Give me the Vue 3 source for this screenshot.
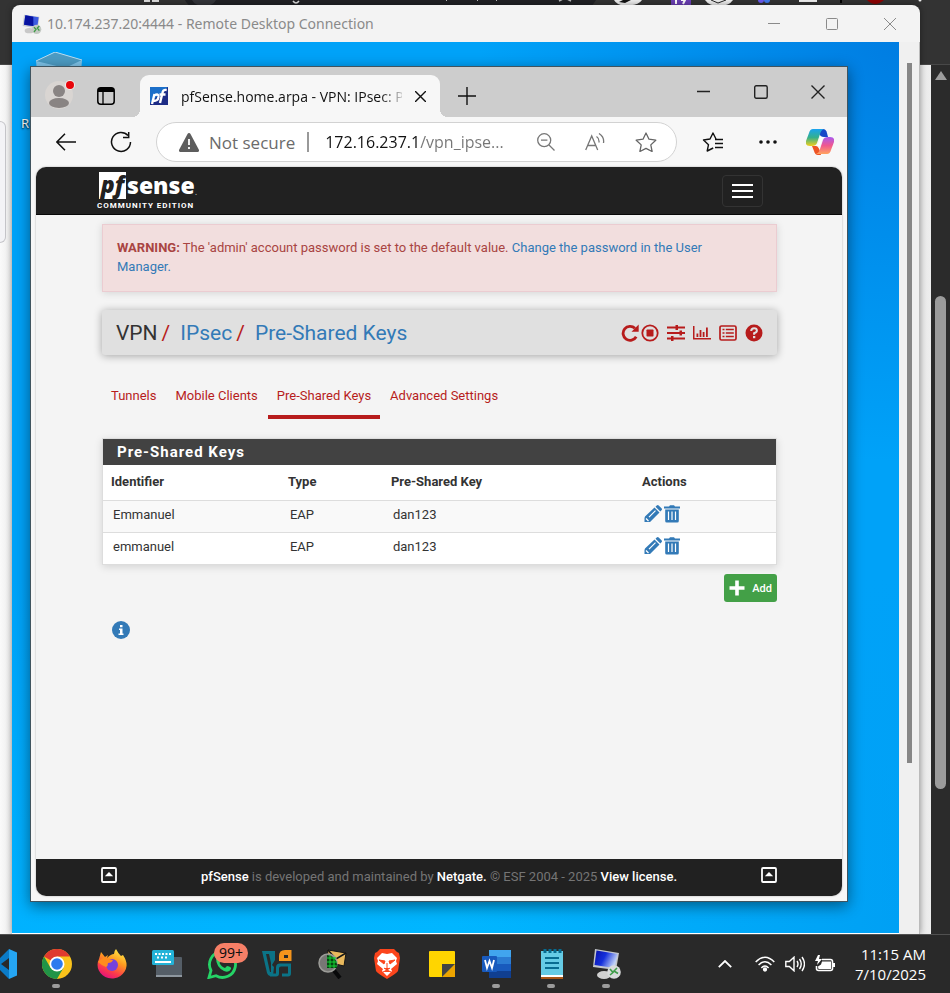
<script setup>
const rows = [
  { id: 'Emmanuel', type: 'EAP', key: 'dan123' },
  { id: 'emmanuel', type: 'EAP', key: 'dan123' },
]
const tabs = [
  { label: 'Tunnels', active: false },
  { label: 'Mobile Clients', active: false },
  { label: 'Pre-Shared Keys', active: true },
  { label: 'Advanced Settings', active: false },
]
</script>

<template>
  <div class="desktop">
    <div class="workspace">
      <!-- Host browser peeking out behind the remote session -->
      <div class="back">
        <div class="back-bar">
          <svg class="back-icons" width="800" height="8" viewBox="0 0 800 8" aria-hidden="true">
            <rect x="0" y="0" width="6" height="2" fill="#ddd" /><rect x="8" y="0" width="7" height="2" fill="#ddd" />
            <path d="M41 0H452Q448 6 446 8H50Q43 5 41 0z" fill="#202125" />
            <path d="M48 0q3 6 12 6t12-6z" fill="#34353a" />
            <path d="M149 1q3 4 6 0" stroke="#ddd" stroke-width="1.500" fill="none" />
            <path d="M302 1l1-1M333 1l1-1M352 1l1-1" stroke="#bbb" fill="none" />
            <path d="M415 1l4-2M423 -1l4 2" stroke="#bbb" stroke-width="1.500" fill="none" />
            <path d="M470 0q4 7 14 5q10 1 14-5z" fill="#eee" /><path d="M475 2l4-2h8l-6 3z" fill="#111" />
            <rect x="527" y="0" width="20" height="6" fill="#6b3fb5" />
            <path d="M532 0v4M537 0h4l-2 4" stroke="#fff" stroke-width="2" fill="none" />
            <path d="M561 0q4 6 14 6t14-6z" fill="#eee" /><path d="M567 0l7 3 8-3" stroke="#222" fill="none" />
            <circle cx="617" cy="0" r="3" fill="#6a5af0" /><circle cx="623" cy="0" r="3" fill="#4179ee" />
            <path d="M656 0v1h16V0" stroke="#eee" stroke-width="2" fill="none" />
            <rect x="696" y="0" width="2" height="3" fill="#000" />
            <path d="M723 0q8 8 17 0z" fill="#8c0303" />
            <circle cx="776" cy="0" r="1.500" fill="#eee" />
          </svg>
        </div>
        <div class="back-page">
          <div class="back-card"></div>
          <div class="back-scroll">
            <svg width="12" height="10" viewBox="0 0 12 10"><path d="M6 0L12 9H0z" fill="#9d9d9d" /></svg>
            <div class="back-thumb"></div>
          </div>
        </div>
      </div>

      <!-- Remote desktop window -->
      <section class="rdp">
        <header class="rdp-title">
          <svg width="20" height="20" viewBox="0 0 30 30" aria-hidden="true">
            <path d="M3 1l23 3-2 18L1 18z" fill="#c9ccd3" /><path d="M5 2l20 3-2 14L3 16z" fill="#3d5be0" />
            <path d="M5 2l12 2 0 14-14-2z" fill="#0712a0" /><ellipse cx="11" cy="25" rx="7" ry="4" fill="#c8c8c8" />
            <circle cx="22" cy="23" r="7" fill="#c3c9c3" /><path d="M18 20l3 3-3 4M26 18l-3 3 3 4" stroke="#3f9b46" stroke-width="2" fill="none" />
          </svg>
          <span class="rdp-name">10.174.237.20:4444 - Remote Desktop Connection</span>
          <div class="rdp-buttons">
            <button aria-label="Minimize session"><svg width="12" height="12" viewBox="0 0 12 12"><path d="M0 5.500h12" /></svg></button>
            <button aria-label="Maximize session"><svg width="12" height="12" viewBox="0 0 12 12"><rect x=".5" y=".5" width="11" height="11" rx="1" /></svg></button>
            <button aria-label="Close session"><svg width="12" height="12" viewBox="0 0 12 12"><path d="M0 0l12 12M12 0L0 12" /></svg></button>
          </div>
        </header>
        <div class="rdp-body">
          <div class="wallpaper">
            <div class="bin">
              <svg width="48" height="60" viewBox="0 0 48 60" aria-hidden="true">
                <path d="M1 9L20 0 47 8 44 50H5z" fill="#7fc4ea" /><path d="M1 9L20 0 47 8 30 16z" fill="#4d9cc4" />
                <path d="M1 9L20 0 47 8" stroke="#b9dcf0" fill="none" />
              </svg>
              <span>Recycle Bin</span>
            </div>

            <!-- Edge window -->
            <section class="edge">
              <header class="tabstrip">
                <button class="profile" aria-label="Profile">
                  <svg width="32" height="32" viewBox="0 0 32 32">
                    <circle cx="15" cy="18" r="14" fill="#d9d5d2" /><circle cx="15" cy="14" r="6" fill="#898483" />
                    <ellipse cx="15" cy="26" rx="10" ry="5" fill="#898483" />
                    <circle cx="26" cy="8" r="5" fill="#eee" /><circle cx="26" cy="8" r="4" fill="#e8050b" />
                  </svg>
                </button>
                <button class="workspaces" aria-label="Tab actions">
                  <svg width="18" height="18" viewBox="0 0 18 18" fill="none" stroke="#000">
                    <rect x=".8" y=".8" width="16.400" height="16.400" rx="3" stroke-width="1.500" /><path d="M1 3h16" stroke-width="4" /><path d="M6 4v13" stroke-width="1.300" />
                  </svg>
                </button>
                <div class="tab">
                  <svg width="18" height="18" viewBox="0 0 18 18" aria-hidden="true">
                    <rect width="18" height="18" fill="#1d2c86" /><path d="M0 0h18L0 16z" fill="#1c6fc9" />
                    <g fill="none" stroke="#fff" stroke-width="2.400"><path d="M2 17L4.500 7M4 8.500q5-2.500 4.500 1.500-.8 4.500-5 3.500" /><path d="M10 16l2.700-11q.6-2.500 4-2M9.500 7.500h6" /></g>
                  </svg>
                  <span class="tab-name">pfSense.home.arpa - VPN: IPsec: P</span>
                  <button aria-label="Close tab"><svg width="11" height="11" viewBox="0 0 11 11"><path d="M0 0l11 11M11 0L0 11" stroke="#111" stroke-width="1.400" /></svg></button>
                </div>
                <button class="plus" aria-label="New tab"><svg width="18" height="18" viewBox="0 0 18 18"><path d="M0 9h18M9 0v18" stroke="#111" stroke-width="1.400" /></svg></button>
                <div class="edge-buttons">
                  <button aria-label="Minimize"><svg width="14" height="14" viewBox="0 0 14 14"><path d="M0 6.500h13" /></svg></button>
                  <button aria-label="Maximize"><svg width="14" height="14" viewBox="0 0 14 14"><rect x=".7" y=".7" width="12.500" height="12.500" rx="1.500" /></svg></button>
                  <button aria-label="Close"><svg width="14" height="14" viewBox="0 0 14 14"><path d="M.5.5l13 13M13.500.5l-13 13" /></svg></button>
                </div>
              </header>

              <div class="toolbar">
                <button class="back-btn" aria-label="Back"><svg width="20" height="18" viewBox="0 0 20 18" fill="none" stroke="#111" stroke-width="1.500"><path d="M20 9H1M9 .8L.9 9 9 17.200" /></svg></button>
                <button class="reload" aria-label="Reload"><svg width="22" height="22" viewBox="0 0 22 22" fill="none" stroke="#111" stroke-width="1.500"><path d="M20.500 11A9.500 9.500 0 1 1 18 4.500M18.700 1v5.500H13" /></svg></button>
                <div class="address">
                  <svg width="20" height="19" viewBox="0 0 20 19" aria-hidden="true"><path d="M10 0q1 0 1.500 1L20 17q.3 2-1.500 2h-17Q-.3 19 0 17L8.500 1Q9 0 10 0z" fill="#5d5d5d" /><path d="M10 6v6M10 14v2" stroke="#fff" stroke-width="1.800" /></svg>
                  <label for="url">Not secure</label>
                  <i class="sep"></i>
                  <input id="url" type="text" value="172.16.237.1/vpn_ipse..." />
                  <button aria-label="Zoom out"><svg width="18" height="18" viewBox="0 0 18 18" fill="none" stroke="#777" stroke-width="1.300"><circle cx="7.200" cy="7.200" r="6.500" /><path d="M4 7.200h6.400M12 12l5.500 5.500" /></svg></button>
                  <button aria-label="Read aloud"><svg width="20" height="18" viewBox="0 0 20 18" fill="none" stroke="#777" stroke-width="1.300"><path d="M.7 17L6.700 3l6 14M2.600 12.500h8.200M11.500 3.500q3 2 2.500 6M14 .5q5.500 3.500 4.500 9.500" /></svg></button>
                  <button aria-label="Favorite"><svg width="22" height="20" viewBox="0 0 22 20" fill="none" stroke="#666" stroke-width="1.300" stroke-linejoin="round"><path d="M11 1l3 6.200 6.800 1-5 4.700 1.300 6.600-6.100-3.200-6.100 3.200 1.300-6.600-5-4.700 6.800-1z" /></svg></button>
                </div>
                <button class="favs" aria-label="Favorites"><svg width="22" height="20" viewBox="0 0 22 20" fill="none" stroke="#111" stroke-width="1.400" stroke-linejoin="round"><path d="M14 7l-3-6-3 6-6.500 1 5 4.700L5.200 19l6-3M13 7.500h8M13 11.500h8M13 15.500h8" /></svg></button>
                <button class="more" aria-label="More"><svg width="18" height="4" viewBox="0 0 18 4" fill="#111"><circle cx="2" cy="2" r="1.800" /><circle cx="9" cy="2" r="1.800" /><circle cx="16" cy="2" r="1.800" /></svg></button>
                <button class="copilot" aria-label="Copilot">
                  <svg width="28" height="26" viewBox="0 0 28 26">
                    <defs>
                      <linearGradient id="cpA" x1="0" y1="0" x2="0" y2="1"><stop offset="0" stop-color="#1aa3f0" /><stop offset=".5" stop-color="#35b08c" /><stop offset="1" stop-color="#f2cf1b" /></linearGradient>
                      <linearGradient id="cpB" x1="0" y1="0" x2="0" y2="1"><stop offset="0" stop-color="#a95af0" /><stop offset=".5" stop-color="#f0588f" /><stop offset="1" stop-color="#ffa45f" /></linearGradient>
                    </defs>
                    <path d="M13 0h4q3 0 4 4l1 4h-4q-4 0-5-4z" fill="#1848c8" />
                    <path d="M6 17h4q3 0 5 9h-3q-3 0-4-4z" fill="#ee5424" />
                    <path d="M7 0h11q-3 1-4 5l-3 9q-1 3-5 3H4q-5 0-4-5L3 4Q4 0 7 0z" fill="url(#cpA)" />
                    <path d="M21 25H10q3-1 4-5l3-9q1-3 5-3h2q5 0 4 5l-3 8q-1 4-4 4z" fill="url(#cpB)" />
                    <path d="M14.500 8h3.500q-1.500 1-2 3l-2 6h-3.500q1.500-1 2-3z" fill="#fff" />
                  </svg>
                </button>
              </div>

              <div class="page">
                <nav class="navbar">
                  <a href="#" class="brand" aria-label="pfSense home">
                    <span class="brand-row"><span class="pf">pf</span><span class="sense">sense</span><span class="reg">.</span></span>
                    <span class="edition">COMMUNITY EDITION</span>
                  </a>
                  <button class="burger" aria-label="Toggle navigation"><i></i><i></i><i></i></button>
                </nav>

                <main class="content">
                  <div class="alert"><strong>WARNING:</strong> The 'admin' account password is set to the default value. <a href="#">Change the password in the User Manager.</a></div>

                  <header class="crumbs">
                    <ol>
                      <li>VPN</li>
                      <li><a href="#">IPsec</a></li>
                      <li><a href="#">Pre-Shared Keys</a></li>
                    </ol>
                    <div class="tools">
                      <a href="#" aria-label="Restart service"><svg width="18" height="18" viewBox="0 0 18 18"><path d="M15.200 12.700A7 7 0 1 1 14 4.300" fill="none" stroke="currentColor" stroke-width="2.800" /><path d="M17.700.5v7.200h-7.200z" fill="currentColor" /></svg></a>
                      <a href="#" aria-label="Stop service"><svg width="18" height="18" viewBox="0 0 18 18"><circle cx="9" cy="9" r="7.700" fill="none" stroke="currentColor" stroke-width="1.800" /><rect x="5.500" y="5.500" width="7" height="7" rx=".7" fill="currentColor" /></svg></a>
                      <a href="#" aria-label="Settings"><svg width="18" height="18" viewBox="0 0 18 18" fill="currentColor"><path d="M0 2.500h18v2H0zM0 8h18v2H0zM0 13.500h18v2H0zM8.500 1H11v5H8.500zM12.500 6.500H15v5h-2.500zM4 12h2.500v5H4z" /></svg></a>
                      <a href="#" aria-label="Status"><svg width="18" height="18" viewBox="0 0 18 18" fill="currentColor"><path d="M0 2h1.500v12H18v1.500H0zM3.500 9.500h1.800V13H3.500zM6.600 6h1.800v7H6.600zM9.700 8h1.800v5H9.700zM13 3.500h1.800V13H13z" /></svg></a>
                      <a href="#" aria-label="Logs"><svg width="18" height="18" viewBox="0 0 18 18"><rect x="1" y="2" width="16" height="14" rx="1.500" fill="none" stroke="currentColor" stroke-width="1.700" /><path d="M3.500 5.500h2M6.800 5.500h8M3.500 9h2M6.800 9h8M3.500 12.500h2M6.800 12.500h8" stroke="currentColor" stroke-width="1.700" /></svg></a>
                      <a href="#" aria-label="Help"><svg width="18" height="18" viewBox="0 0 18 18"><circle cx="9" cy="9" r="8.500" fill="currentColor" /><path d="M6.200 7q.2-2.700 2.900-2.700Q11.900 4.300 11.900 6.700 11.900 8.200 9.100 9.300V10.700" fill="none" stroke="#e0e0e0" stroke-width="2" /><rect x="8" y="12" width="2.300" height="2.200" fill="#e0e0e0" /></svg></a>
                    </div>
                  </header>

                  <nav class="tabs">
                    <a v-for="t in tabs" :key="t.label" href="#" :class="{ active: t.active }">{{ t.label }}</a>
                  </nav>

                  <section class="panel">
                    <h2>Pre-Shared Keys</h2>
                    <table>
                      <thead>
                        <tr><th class="c1">Identifier</th><th class="c2">Type</th><th class="c3">Pre-Shared Key</th><th class="c4">Actions</th></tr>
                      </thead>
                      <tbody>
                        <tr v-for="r in rows" :key="r.id">
                          <td>{{ r.id }}</td><td>{{ r.type }}</td><td>{{ r.key }}</td>
                          <td>
                            <div class="actions">
                              <a href="#" :aria-label="'Edit ' + r.id"><svg width="18" height="18" viewBox="0 0 18 18"><path d="M1 11.500L10.500 2.500 15.500 7.500 6 17H.5v-4zM11.500 1.700l1.200-1.200q1-1 2 0L17.500 3.300q1 1 0 2l-1.200 1.200z" fill="currentColor" /><path d="M5 12.200l6.500-6.500M2 13.500l2.500 2.500" stroke="#fff" stroke-width="1.200" /></svg></a>
                              <a href="#" :aria-label="'Delete ' + r.id"><svg width="16" height="18" viewBox="0 0 16 18"><path d="M0 1.500h5L6 .3h4l1 1.200h5v2H0zM1.200 4.500h13.600v11.500q0 1.500-1.500 1.500H2.700q-1.500 0-1.500-1.500z" fill="currentColor" /><path d="M4.500 6.500v8.500M8 6.500v8.500M11.500 6.500v8.500" stroke="#fff" stroke-width="1.200" /></svg></a>
                            </div>
                          </td>
                        </tr>
                      </tbody>
                    </table>
                  </section>

                  <div class="add-row">
                    <a href="#" class="add"><svg width="16" height="16" viewBox="0 0 16 16" aria-hidden="true"><path d="M8 .5v15M.5 8h15" stroke="#fff" stroke-width="3.600" /></svg>Add</a>
                  </div>
                  <button class="info" aria-label="Information"><svg width="18" height="18" viewBox="0 0 18 18"><circle cx="9" cy="9" r="9" fill="#337ab7" /><path d="M8 4h2.500v2.300H8zM7 7.500h3.500v5h1V14H6.500v-1.500H8V9H7z" fill="#fff" /></svg></button>
                </main>

                <footer class="foot">
                  <a href="#" aria-label="Scroll to top"><svg width="16" height="16" viewBox="0 0 16 16"><rect x="1" y="1" width="14" height="14" rx="1" fill="none" stroke="#fff" stroke-width="1.800" /><path d="M3.800 9.300L8 5l4.200 4.300z" fill="#fff" /></svg></a>
                  <p><a href="#">pfSense</a> is developed and maintained by <a href="#">Netgate.</a> © ESF 2004 - 2025 <a href="#">View license.</a></p>
                  <a href="#" aria-label="Back to top"><svg width="16" height="16" viewBox="0 0 16 16"><rect x="1" y="1" width="14" height="14" rx="1" fill="none" stroke="#fff" stroke-width="1.800" /><path d="M3.800 9.300L8 5l4.200 4.300z" fill="#fff" /></svg></a>
                </footer>
              </div>
            </section>
          </div>
          <div class="rdp-scroll"><div class="rdp-thumb"></div></div>
        </div>
      </section>
    </div>

    <!-- Taskbar -->
    <footer class="taskbar">
      <div class="apps">
        <button aria-label="Visual Studio Code">
          <svg width="30" height="30" viewBox="0 0 30 30"><path d="M22 0v9l-8 6 8 6v9L12 20 4 25l-3-2 8-8-8-8 3-2 8 5z" fill="#0b7bc7" /><path d="M22 0l8 3.500v23L22 30z" fill="#25a5f2" /></svg>
        </button>
        <button class="run" aria-label="Google Chrome">
          <svg width="30" height="30" viewBox="0 0 30 30"><circle cx="15" cy="15" r="15" fill="#f9c21b" /><path d="M15 15L2 7.500A15 15 0 0 1 28 7.500H15z" fill="#df3a2f" /><path d="M2 7.500A15 15 0 0 0 15 30l6.500-11.200L8.500 18.800z" fill="#219447" /><circle cx="15" cy="15" r="7.500" fill="#fff" /><circle cx="15" cy="15" r="5.800" fill="#2c7bef" /></svg>
        </button>
        <button aria-label="Firefox">
          <svg width="30" height="30" viewBox="0 0 30 30">
            <defs><linearGradient id="fx" x1=".8" y1="0" x2=".3" y2="1"><stop offset="0" stop-color="#fff04a" /><stop offset=".4" stop-color="#ff9a1f" /><stop offset=".75" stop-color="#fb3a4b" /><stop offset="1" stop-color="#e3107f" /></linearGradient></defs>
            <path d="M17 5q0-3 2-5 2 4 5 7l2-1q4 6 3.500 11A14.500 13.500 0 1 1 2 10L4 3l4 5 3-2-1 3q4-4 7-4z" fill="url(#fx)" />
            <circle cx="15" cy="16" r="6" fill="#7642dc" /><path d="M1 13q5-6 9-4 3 2 6 2-1 3-5 3 0 3-2 4-5-2-8-5z" fill="#ff8c1d" />
          </svg>
        </button>
        <button aria-label="On-screen keyboard">
          <svg width="30" height="30" viewBox="0 0 30 30"><rect x="4" y="8" width="26" height="20" rx="1" fill="#555e67" /><path d="M4 26h26v2H4z" fill="#8e979f" /><rect x="0" y="1" width="22" height="15" rx="1.500" fill="#23b3d8" /><path d="M3 5h2m1.500 0h2m1.500 0h2m1.500 0h2m1.500 0h2M5 8.500h2m2 0h2m2 0h2" stroke="#fff" stroke-width="2" /><path d="M3 13h16" stroke="#fff" stroke-width="2" /></svg>
        </button>
        <button class="wa" aria-label="WhatsApp">
          <svg width="30" height="30" viewBox="0 0 30 30"><path d="M2 28.500l2-7A13 13 0 1 1 9 26.700z" fill="none" stroke="#25d366" stroke-width="2.800" /><path d="M9 9q2-3 4 0l1 3-1.500 2q2 4 5.500 5l2-2q5 1 4 3-2 4-7 2Q9 18 9 9z" fill="#25d366" /></svg>
          <span class="badge">99+</span>
        </button>
        <button aria-label="Virtual servers">
          <svg width="30" height="30" viewBox="0 0 30 30"><path d="M0 2h13v9l-3 5 2 2-1 9H8Q6 27 5 24L0 2zm4 3l4 18h1V14L7 5z" fill="#0b7386" fill-rule="evenodd" /><path d="M29 14.500v10q0 3-3 3h-6v-3h6v-7h-7q-2 0-2 2v5q0 3-3 3H8v-3h6v-6q0-4 4-4z" fill="#0b7386" /><path d="M17 12V7q0-6 6-6h6.500v11zm5-3h4V6h-4z" fill="#f4941c" fill-rule="evenodd" /></svg>
        </button>
        <button aria-label="Mail inspector">
          <svg width="30" height="30" viewBox="0 0 30 30"><path d="M11 1l18 3-2 13-17-4z" fill="#e9b95d" stroke="#151515" /><path d="M11 1l8 9 10-6" stroke="#151515" fill="none" stroke-width="1.500" /><path d="M15 19l8 10" stroke="#08090a" stroke-width="4" /><circle cx="11" cy="14" r="9" fill="#777774" stroke="#9c9c98" stroke-width="1.500" /><path d="M10 6q11 2 10 13H10z" fill="#064511" /><path d="M10 9h9M10 13h10M10 17h10M13 6v13M17 8v11" stroke="#15d634" /></svg>
        </button>
        <button aria-label="Brave">
          <svg width="30" height="30" viewBox="0 0 30 30"><path d="M8 0h14l3 3 2 1 1 5-2 13q-1 2-11 8Q5 24 4 22L2 9l1-5 2-1z" fill="#fb451c" /><path d="M10 4l5 1 5-1 5 5-1 3 1 3-6 5 1 2-5 5-5-5 1-2-6-5 1-3-1-3z" fill="#fff" /><path d="M7 11l6 1-1 3zM23 11l-6 1 1 3zM12 19l3 2 3-2M15 14v7M11 23l4-2 4 2" fill="#fb451c" stroke="#fb451c" /></svg>
        </button>
        <button aria-label="Sticky Notes">
          <svg width="30" height="30" viewBox="0 0 30 30"><rect x="2" y="2" width="26" height="26" rx="1" fill="#ffd500" /><path d="M15 28L28 15v13z" fill="#eca400" /><path d="M15 28V15h13z" fill="#434343" /></svg>
        </button>
        <button class="run" aria-label="Word">
          <svg width="30" height="30" viewBox="0 0 30 30"><path d="M7 1h22v7H7z" fill="#41a5ee" /><path d="M7 8h22v7H7z" fill="#2b7cd3" /><path d="M7 15h22v7H7z" fill="#185abd" /><path d="M7 22h22v7H7z" fill="#103f91" /><rect x="0" y="7" width="15" height="16" rx="1" fill="#185abd" /><path d="M3 11l2 8 2.500-7L10 19l2-8" stroke="#fff" stroke-width="1.800" fill="none" /></svg>
        </button>
        <button class="run" aria-label="Notepad">
          <svg width="30" height="30" viewBox="0 0 30 30"><rect x="4" y="2" width="22" height="26" fill="#65cbe5" /><path d="M4 26h22v2H4z" fill="#fff" /><path d="M4 28h22v2H4z" fill="#a75616" /><path d="M8 9h14M8 14h14M8 19h14" stroke="#076c91" stroke-width="2" /><path d="M8 0v4M13 0v4M18 0v4M23 0v4" stroke="#076c91" stroke-width="3" /></svg>
        </button>
        <button class="run" aria-label="Remote Desktop Connection">
          <svg width="30" height="30" viewBox="0 0 30 30">
            <defs><linearGradient id="scr" x1="0" x2="1" y1="0" y2=".4"><stop offset="0" stop-color="#0810a8" /><stop offset=".5" stop-color="#1530db" /><stop offset="1" stop-color="#c0d1f7" /></linearGradient></defs>
            <path d="M3 0l24 4-3 17-23-3z" fill="#c4c7cd" /><path d="M4.500 1.500l21 3.500-3 14-20-3z" fill="url(#scr)" /><ellipse cx="12" cy="26" rx="7" ry="4" fill="#d0d0d0" /><circle cx="22" cy="23" r="6.800" fill="#d9dbdc" /><path d="M18 20l3 3.500-3 2.500M25 19l-3 3 4 2.500" stroke="#3e9c49" stroke-width="1.600" fill="none" />
          </svg>
        </button>
      </div>
      <div class="tray">
        <button aria-label="Show hidden icons"><svg width="14" height="8" viewBox="0 0 14 8" fill="none" stroke="#fff" stroke-width="1.800"><path d="M.8 7.200L7 1l6.200 6.200" /></svg></button>
        <div class="status">
          <svg width="20" height="16" viewBox="0 0 20 16" fill="none" stroke="#fff" stroke-width="1.500"><path d="M.7 6Q10-3.500 19.300 6M3.600 9Q10 2.500 16.400 9M6.400 12Q10 8 13.600 12" /><circle cx="10" cy="13.500" r="1.400" fill="#fff" /></svg>
          <svg width="20" height="16" viewBox="0 0 20 16" fill="none" stroke="#fff" stroke-width="1.400"><path d="M.8 5.500h3.500L9 1.200v13.600l-4.700-4.300H.8zM12 5q2 3 0 6M14.500 3q3.500 5 0 10M17 1q5 7 0 14" /></svg>
          <svg width="20" height="18" viewBox="0 0 20 18"><path d="M7 4.500h8.500q2 0 2 2v7q0 2-2 2H3.500q-2 0-2-2V11" fill="none" stroke="#fff" stroke-width="1.600" /><path d="M7 6.500h9v7.500H4q-1 0-1-2.500l3-2z" fill="#fff" /><path d="M18 8h2v4h-2zM3 0L0 6h3L2 10l5-6H4l1-4z" fill="#fff" /></svg>
        </div>
        <time><span>11:15 AM</span><span>7/10/2025</span></time>
      </div>
    </footer>
  </div>
</template>

<style>
html, body { height: 100%; margin: 0; }
#app { min-height: 100%; display: flex; flex-direction: column; }
</style>

<style scoped>
* { box-sizing: border-box; }
button { border: 0; padding: 0; background: none; display: flex; align-items: center; justify-content: center; font: inherit; color: inherit; cursor: pointer; flex: none; }
svg { display: block; flex: none; }
a { color: #337ab7; text-decoration: none; }
.desktop { flex: 1; min-height: 100vh; display: flex; flex-direction: column; font-family: "Noto Sans", "Open Sans", sans-serif; overflow: hidden; }
.workspace { position: relative; flex: 1; display: grid; padding: 5px 30px 0 12px; }

.back { position: absolute; inset: 0; display: flex; flex-direction: column; }
.back-bar { height: 65px; background: #333; border-bottom: 1px solid #484848; display: flex; padding-left: 144px; overflow: hidden; }
.back-page { flex: 1; display: flex; justify-content: space-between; background: linear-gradient(90deg, #fafafa, #ebebeb 12px, #ebebeb 925px, #f7f7f7); }
.back-card { width: 6px; height: 122px; margin-top: 56px; border: 1px solid #c5c5c9; border-left: 0; border-radius: 0 6px 6px 0; background: #f3f3f6; }
.back-scroll { width: 19px; background: #2b2b2b; padding-top: 6px; display: flex; flex-direction: column; align-items: center; gap: 215px; }
.back-thumb { width: 11px; height: 493px; border-radius: 6px; background: #9b9b9b; }

.rdp { position: relative; display: flex; flex-direction: column; border-radius: 8px 8px 0 0; overflow: hidden; background: #f3f3f3; box-shadow: 0 0 6px #0006; }
.rdp-title { height: 37px; display: flex; align-items: center; gap: 5px; padding: 0 1px 0 10px; color: #8a8a8a; font-size: 14px; }
.rdp-buttons { margin-left: auto; display: flex; }
.rdp-buttons button { width: 58px; height: 36px; }
.rdp-buttons svg, .edge-buttons svg { fill: none; stroke: #8a8a8a; }
.rdp-body { flex: 1; display: flex; }
.wallpaper { position: relative; flex: 1; min-width: 0; display: grid; padding: 24px 51px 31px 18px; background: radial-gradient(circle at 100% 0, #007de2, #007de200 420px), linear-gradient(180deg, #00a2f8, #00a2f8 60%, #00a2f800), linear-gradient(90deg, #00b2ff, #00b6ff 50%, #00a0f4); border-bottom: 1px solid #fff; }
.bin { position: absolute; left: 10px; top: 10px; display: flex; flex-direction: column; gap: 1px; padding-left: 13px; color: #fff; font-size: 13px; line-height: 20px; white-space: nowrap; text-shadow: 0 1px 2px #000; }
.bin span { margin-left: -14px; }
.rdp-scroll { width: 21px; background: #f0f0f0; border-right: 1px solid #bbb; padding: 21px 7px 0 8px; }
.rdp-thumb { height: 700px; background: #868686; }

.edge { position: relative; min-width: 0; display: flex; flex-direction: column; background: #f7f7f7; border: 1px solid #40545f; box-shadow: 0 4px 14px #0007; }
.tabstrip { height: 50px; background: #cdcdcd; display: flex; align-items: center; padding-right: 1px; }
.profile { margin: 2px 0 0 13px; }
.workspaces { margin-left: 21px; margin-top: 8px; }
.tab { position: relative; align-self: flex-end; width: 300px; height: 42px; margin-left: 25px; padding: 0 14px 0 10px; display: flex; align-items: center; gap: 13px; background: #f7f7f7; border-radius: 9px 9px 0 0; }
.tab::before, .tab::after { content: ""; position: absolute; bottom: 0; width: 8px; height: 8px; }
.tab::before { left: -8px; background: radial-gradient(circle at 0 0, #cdcdcd 8px, #f7f7f7 8px); }
.tab::after { right: -8px; background: radial-gradient(circle at 100% 0, #cdcdcd 8px, #f7f7f7 8px); }
.tab-name { flex: 1; min-width: 0; white-space: nowrap; font-family: "Open Sans", "Noto Sans", sans-serif; font-size: 14px; background: linear-gradient(90deg, #111 90%, #11111133); -webkit-background-clip: text; background-clip: text; color: transparent; }
.plus { margin-left: 18px; margin-top: 8px; }
.edge-buttons { margin-left: auto; display: flex; }
.edge-buttons button { width: 57px; height: 48px; }
.edge-buttons svg { stroke: #222; stroke-width: 1.4px; }
.toolbar { height: 50px; display: flex; align-items: center; }
.back-btn { margin-left: 25px; }
.reload { margin-left: 34px; }
.address { flex: 1; min-width: 0; height: 40px; margin-left: 24px; padding: 0 19px 0 22px; display: flex; align-items: center; border: 1px solid #d2d2d2; border-radius: 20px; background: #fff; font-family: "Open Sans", "Noto Sans", sans-serif; font-size: 17px; color: #6b6b6b; }
.address label { margin-left: 10px; white-space: nowrap; }
.sep { width: 2px; height: 20px; margin: 0 16px 0 12px; background: #999; }
.address input { flex: 1; min-width: 0; border: 0; padding: 0; outline: 0; font: inherit; font-size: 16px; color: transparent; background: linear-gradient(90deg, #111 92px, #767676 92px); -webkit-background-clip: text; background-clip: text; }
.address button + button { margin-left: 30px; }
.favs { margin-left: 25px; }
.more { margin-left: 35px; }
.copilot { margin: 0 13px 0 29px; }

.page { flex: 1; margin: 0 5px 5px; border-radius: 10px; overflow: hidden; background: #f4f4f4; display: flex; flex-direction: column; font-family: Roboto, "Liberation Sans", sans-serif; font-size: 13px; line-height: 19px; color: #333; box-shadow: 0 0 2px #0005; }
.navbar { height: 48px; background: #212121; border-bottom: 1px solid #080808; display: flex; justify-content: space-between; align-items: center; padding: 0 79px 0 61px; }
.brand { color: #fff; display: flex; flex-direction: column; gap: 1px; padding-top: 2px; }
.brand-row { display: flex; align-items: flex-end; height: 27px; margin-left: 2px; }
.pf { width: 27px; height: 27px; background: #fff; color: #212121; font: italic 800 23px/25px "Open Sans", sans-serif; text-align: center; }
.sense { font: 800 23px/28px "Open Sans", sans-serif; margin-left: 1px; }
.reg { font-size: 10px; color: #aaa; line-height: 14px; }
.edition { font-size: 8px; line-height: 11px; font-weight: 700; letter-spacing: 1px; }
.burger { width: 41px; height: 32px; flex-direction: column; gap: 4px; border: 1px solid #333; border-radius: 4px; }
.burger i { width: 21px; height: 2px; background: #fff; }
.content { flex: 1; padding: 9px 65px 20px 66px; display: flex; flex-direction: column; }
.alert { padding: 13px 50px 15px 14px; border: 1px solid #ebccd1; background: #f2dede; color: #a94442; box-shadow: 0 1px 8px #0002; }
.crumbs { margin-top: 18px; height: 45px; padding: 0 14px; display: flex; align-items: center; justify-content: space-between; background: #e0e0e0; border-radius: 3px; box-shadow: 0 1px 8px #0005; }
.crumbs ol { margin: 0; padding: 0; list-style: none; display: flex; font-size: 21px; line-height: 30px; }
.crumbs li + li::before { content: "/"; color: #b71c1c; padding: 0 10px 0 4px; }
.tools { display: flex; gap: 8px; }
.tools a { color: #b71c1c; }
.tools a + a:nth-child(2) { margin-left: -6px; }
.tabs { margin-top: 22px; display: flex; }
.tabs a { height: 42px; padding: 9px 9px 0; border-bottom: 4px solid transparent; color: #b71c1c; margin-right: 1px; }
.tabs a.active { border-color: #b71c1c; }
.panel { margin-top: 19px; border: 1px solid #ddd; background: #fff; box-shadow: 0 2px 8px #0002; }
.panel h2 { margin: 0; padding: 0 14px; height: 26px; background: #424242; color: #fff; font-size: 15px; line-height: 26px; font-weight: 700; letter-spacing: 1px; }
table { width: 100%; border-collapse: collapse; table-layout: fixed; }
th { height: 35px; padding: 0 8px 2px; text-align: left; font-weight: 700; }
td { height: 32px; padding: 0 10px 4px; border-top: 1px solid #ddd; }
tbody tr:nth-child(odd) { background: #f9f9f9; }
.c1 { width: 26.300%; } .c2 { width: 15.300%; } .c3 { width: 37.300%; }
.actions { display: flex; align-items: center; gap: 2px; }
.add-row { margin-top: 9px; display: flex; justify-content: flex-end; }
.add { height: 28px; padding: 0 5px; display: flex; align-items: center; gap: 7px; border-radius: 3px; background: #43a047; color: #fff; font-size: 11px; font-weight: 500; }
.info { align-self: flex-start; margin: 19px 0 0 10px; }
.foot { height: 37px; padding: 8px 65px 0; background: #212121; color: #757575; display: flex; align-items: flex-start; justify-content: space-between; }
.foot p { margin: 0; white-space: nowrap; }
.foot a { color: #fff; font-weight: 500; }

.taskbar { position: relative; height: 59px; background: #292929; border-top: 1px solid #505050; display: flex; align-items: center; justify-content: space-between; }
.apps { display: flex; margin-left: -26px; }
.apps button { position: relative; width: 55px; height: 58px; }
.apps .run::after { content: ""; position: absolute; bottom: 5px; left: 23px; width: 8px; height: 4px; border-radius: 2px; background: #9b9b9b; }
.badge { position: absolute; top: 8px; left: 20px; height: 20px; width: 34px; border-radius: 10px; background: #f67f67; color: #111; font-size: 14px; line-height: 20px; }
.tray { display: flex; align-items: center; color: #fff; padding-right: 24px; }
.status { display: flex; align-items: center; gap: 10px; margin: 0 20px 0 23px; }
time { display: flex; flex-direction: column; text-align: right; font-family: "Open Sans", "Noto Sans", sans-serif; font-size: 15px; line-height: 20px; white-space: nowrap; }
</style>
